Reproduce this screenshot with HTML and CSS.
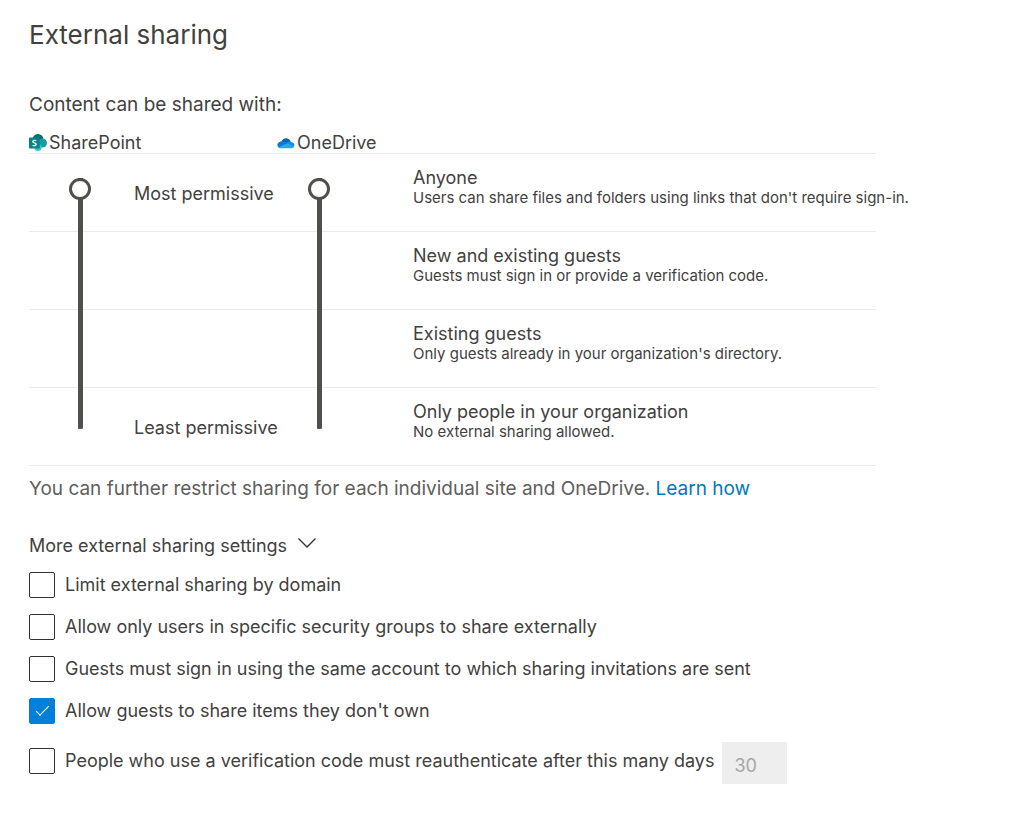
FILE: index.html
```
<!DOCTYPE html>
<html lang="en">
  <head>
    <meta charset="UTF-8" />
    <meta name="viewport" content="width=device-width, initial-scale=1.0" />
    <title>External sharing</title>
    <link rel="stylesheet" href="styles.css">
  </head>
  <body>
    <main class="page">
      <h1>External sharing</h1>
      <h2>Content can be shared with:</h2>

      <div class="products">
        <label class="product" for="sharepoint">
          <svg width="18" height="18" viewBox="0 0 20 20" aria-hidden="true">
            <circle cx="10" cy="6" r="6" fill="#036c70" />
            <circle cx="15" cy="10" r="5" fill="#1a9ba1" />
            <circle cx="10" cy="15" r="4" fill="#37c6d0" />
            <rect x="0" y="4" width="12" height="12" rx="1" fill="#038387" />
            <path d="M8 7.500C7 6.800 4.200 6.800 4.200 8.500C4.200 10.200 8 9.700 8 11.500C8 13.300 5 13.200 4 12.500" fill="none" stroke="#fff" stroke-width="1.500" />
          </svg>
          <span>SharePoint</span>
        </label>
        <label class="product" for="onedrive">
          <svg width="18" height="18" viewBox="0 0 19 19" aria-hidden="true">
            <path d="M5 8C6 4 12 3 14.500 8L9 13L2 14C0 11 2 8 5 8Z" fill="#0364b8" />
            <path d="M5 7.800C7 7.500 8.500 8.500 11 10L5 15C1 15.500-.5 12 1 9.800C2 8.400 3.500 7.800 5 7.800Z" fill="#0f78d4" />
            <path d="M10 9.500C12 7.500 14.500 7.400 16 9C19 9.500 19 13 17 14Z" fill="#1490df" />
            <path d="M2 13.800L10.500 9.700L18 13.200C17.500 14.500 16.500 15 15.500 15H5C3.800 15 2.700 14.700 2 13.800Z" fill="#28a8ea" />
          </svg>
          <span>OneDrive</span>
        </label>
      </div>

      <div class="levels">
        <div class="level level-1">
          <h3>Anyone</h3>
          <p>Users can share files and folders using links that don't require sign-in.</p>
        </div>
        <div class="level level-2">
          <h3>New and existing guests</h3>
          <p>Guests must sign in or provide a verification code.</p>
        </div>
        <div class="level level-3">
          <h3>Existing guests</h3>
          <p>Only guests already in your organization's directory.</p>
        </div>
        <div class="level level-4">
          <h3>Only people in your organization</h3>
          <p>No external sharing allowed.</p>
        </div>
        <input type="range" id="sharepoint" class="slider slider-sharepoint" min="0" max="3" value="3" />
        <div class="scale">
          <span>Most permissive</span>
          <span>Least permissive</span>
        </div>
        <input type="range" id="onedrive" class="slider slider-onedrive" min="0" max="3" value="3" />
      </div>

      <p class="note">You can further restrict sharing for each individual site and OneDrive. <a href="#">Learn how</a></p>

      <button type="button" class="more">
        More external sharing settings
        <svg width="20" height="12" viewBox="0 0 20 12" aria-hidden="true">
          <path d="M1.500 1.500L10 10L18.500 1.500" fill="none" stroke="#323130" stroke-width="1.300" />
        </svg>
      </button>

      <form class="settings">
        <label class="option"><input type="checkbox" /> Limit external sharing by domain</label>
        <label class="option"><input type="checkbox" /> Allow only users in specific security groups to share externally</label>
        <label class="option"><input type="checkbox" /> Guests must sign in using the same account to which sharing invitations are sent</label>
        <label class="option"><input type="checkbox" checked /> Allow guests to share items they don't own</label>
        <div class="reauth">
          <label class="option"><input type="checkbox" /> People who use a verification code must reauthenticate after this many days</label>
          <input type="text" class="days" value="30" aria-label="Days" disabled />
        </div>
      </form>
    </main>
  </body>
</html>
```
FILE: styles.css
```
body {
  margin: 0;
  background-color: #fff;
  color: #424140;
  font-family: Inter, "Liberation Sans", sans-serif;
  font-size: 18px;
  line-height: 24px;
}
h1, h2, h3, p {
  margin: 0;
  font-weight: 400;
}
.page {
  padding: 18px 29px;
}
h1 {
  font-size: 26px;
  line-height: 34px;
}
h2 {
  margin-top: 41px;
  font-size: 19px;
}
.products {
  display: grid;
  grid-template-columns: 248px 1fr;
  margin-top: 14px;
}
.product {
  display: flex;
  align-items: center;
  gap: 2px;
}

/* levels: the rows run the full width, the sliders share their grid cells */
.levels {
  display: grid;
  grid-template-columns: 102px 150px 76px 1fr;
  grid-template-rows: repeat(4, 78px);
  max-width: 847px;
  margin-top: -2px;
  border-top: 1px solid #ebebeb;
}
.level {
  grid-column: 1 / -1;
  padding: 14px 0 0 384px;
  border-bottom: 1px solid #ebebeb;
  white-space: nowrap;
}
.level-1 { grid-row: 1; }
.level-2 { grid-row: 2; }
.level-3 { grid-row: 3; }
.level-4 { grid-row: 4; }
h3 {
  font-size: 18px;
  line-height: 20px;
}
.level p {
  font-size: 15px;
  line-height: 20px;
}
.slider {
  grid-row: 1 / 5;
  justify-self: center;
  width: 22px;
  height: 251px;
  margin: 24px 0 0;
  writing-mode: vertical-lr;
  direction: rtl;
  appearance: none;
  background: none;
}
.slider-sharepoint { grid-column: 1; }
.slider-onedrive { grid-column: 3; }
.slider::-webkit-slider-runnable-track {
  width: 22px;
  border-radius: 0 0 12px 12px;
  background: linear-gradient(#4f4f4b, #4f4f4b) center / 5px 100% no-repeat;
}
.slider::-webkit-slider-thumb {
  appearance: none;
  box-sizing: border-box;
  width: 22px;
  height: 22px;
  border: 3px solid #4f4f4b;
  border-radius: 50%;
  background-color: #fff;
}
.scale {
  grid-column: 2;
  grid-row: 1 / 5;
  display: flex;
  flex-direction: column;
  justify-content: space-between;
  padding: 28px 0 26px 3px;
}

.note {
  margin-top: 11px;
  color: #605e5c;
  font-size: 19px;
}
a {
  color: #0078bf;
  text-decoration: none;
}
.more {
  display: flex;
  align-items: center;
  gap: 10px;
  margin-top: 33px;
  padding: 0;
  border: none;
  background: none;
  color: inherit;
  font: inherit;
}
.more svg {
  margin-bottom: 6px;
}
.settings {
  display: flex;
  flex-direction: column;
  gap: 16px;
  margin-top: 14px;
}
.option {
  display: flex;
  align-items: center;
  gap: 10px;
}
input[type=checkbox] {
  appearance: none;
  flex: none;
  box-sizing: border-box;
  display: flex;
  justify-content: center;
  width: 26px;
  height: 26px;
  margin: 0;
  border: 1px solid #323130;
  border-radius: 2px;
}
input[type=checkbox]:checked {
  border-color: #0080d9;
  background-color: #0080d9;
}
input[type=checkbox]:checked::after {
  content: "";
  width: 12px;
  height: 5px;
  margin-top: 7px;
  border-left: 1px solid #fff;
  border-bottom: 1px solid #fff;
  transform: rotate(-45deg);
}
.reauth {
  display: flex;
  align-items: center;
  gap: 8px;
  margin-top: 2px;
}
.reauth .option {
  padding-bottom: 4px;
}
.days {
  box-sizing: border-box;
  width: 65px;
  height: 42px;
  padding: 4px 12px 0;
  border: none;
  background-color: #eee;
  color: #a6a6a6;
  font: inherit;
}
```
